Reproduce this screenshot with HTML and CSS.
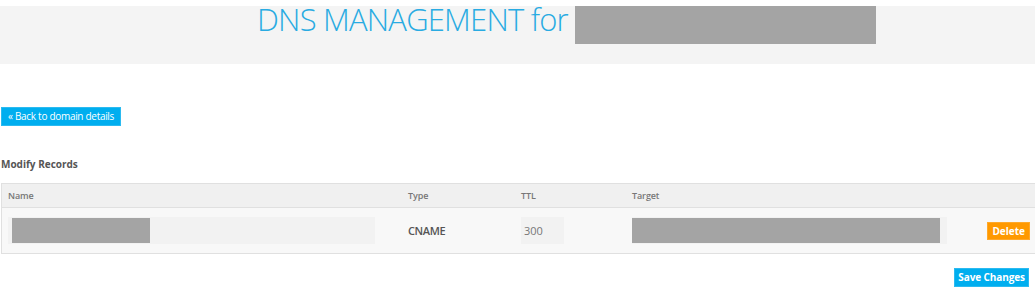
FILE: index.html
```html
<!DOCTYPE html>
<html lang="en">
<head>
<meta charset="utf-8">
<title>DNS Management</title>
<link rel="stylesheet" href="styles.css">
</head>
<body>
<header class="hero">
  <h1 class="hero-title">DNS MANAGEMENT for <span class="redact redact-title"></span></h1>
</header>
<main class="content">
  <div class="back-row"><a class="btn btn-blue" href="#">« Back to domain details</a></div>
  <h2 class="section-title">Modify Records</h2>
  <div class="records">
    <div class="rec-row rec-head">
      <div class="cell">Name</div>
      <div class="cell">Type</div>
      <div class="cell">TTL</div>
      <div class="cell">Target</div>
      <div class="cell"></div>
    </div>
    <div class="rec-row rec-body">
      <div class="cell"><div class="field field-name"><span class="redact redact-name"></span></div></div>
      <div class="cell type">CNAME</div>
      <div class="cell"><input class="field field-ttl" type="text" value="300"></div>
      <div class="cell"><div class="field field-target"><span class="redact redact-target"></span></div></div>
      <div class="cell actions"><a class="btn btn-orange" href="#">Delete</a></div>
    </div>
  </div>
  <div class="save-row"><a class="btn btn-blue btn-bold" href="#">Save Changes</a></div>
</main>
</body>
</html>
```
FILE: styles.css
```css
html, body {
  margin: 0;
  padding: 0;
  background: #ffffff;
  overflow: hidden;
}
body {
  font-family: "Open Sans", "Liberation Sans", sans-serif;
  color: #555;
}
.hero {
  display: flow-root;
  margin-top: 6px;
  height: 58px;
  background: #f4f4f4;
  padding-left: 257px;
}
.hero-title {
  margin: 0;
  font-size: 31px;
  font-weight: 300;
  line-height: 24px;
  letter-spacing: -0.8px;
  color: #29abe2;
  white-space: nowrap;
}
.redact {
  display: inline-block;
  background: #a4a4a4;
}
.redact-title {
  width: 301px;
  height: 38px;
  vertical-align: -13px;
}
.content {
  padding-left: 1px;
}
.back-row {
  display: flex;
  margin-top: 43px;
}
.btn {
  display: inline-block;
  font-size: 10px;
  color: #ffffff;
  text-decoration: none;
  white-space: nowrap;
}
.btn-blue {
  background: #00aeef;
  border: 1px solid #2bbaf0;
  padding: 0 6px;
  line-height: 17px;
  letter-spacing: -0.3px;
}
.btn-bold {
  font-weight: 700;
  padding: 0 3px;
  letter-spacing: -0.1px;
}
.btn-orange {
  background: #ff9900;
  border: 1px solid #ffa82a;
  font-weight: 700;
  padding: 0 4px;
  line-height: 16px;
}
.section-title {
  margin: 31px 0 0;
  font-size: 10px;
  font-weight: 700;
  line-height: 15px;
  color: #555;
}
.records {
  margin-top: 11px;
  border-top: 1px solid #e0e0e0;
  border-left: 1px solid #e0e0e0;
  border-bottom: 1px solid #e0e0e0;
}
.rec-row {
  display: grid;
  grid-template-columns: 400px 113px 111px 1fr auto;
  align-items: center;
}
.rec-head {
  background: #f0f0f0;
  height: 23px;
  border-bottom: 1px solid #e0e0e0;
  font-size: 9px;
  font-weight: 600;
  letter-spacing: -0.1px;
  color: #777;
}
.rec-body {
  background: #f8f8f8;
  padding: 9px 0;
}
.cell {
  padding-left: 6px;
}
.type {
  font-size: 11px;
  font-weight: 600;
  letter-spacing: -0.4px;
  color: #555;
}
.field {
  display: block;
  box-sizing: border-box;
  height: 27px;
  background: #f2f2f2;
  border: none;
  margin: 0;
}
.field-name {
  width: 367px;
  padding: 1px 0 1px 4px;
}
.redact-name {
  width: 138px;
  height: 25px;
}
.field-ttl {
  width: 43px;
  padding: 0 3px;
  font-family: "Open Sans", "Liberation Sans", sans-serif;
  font-size: 11px;
  color: #777;
  outline: none;
}
.field-target {
  width: 315px;
  padding: 1px 0;
}
.redact-target {
  width: 308px;
  height: 25px;
}
.actions {
  padding-right: 5px;
  display: flex;
  justify-content: flex-end;
}
.save-row {
  display: flex;
  justify-content: flex-end;
  margin-top: 14px;
  padding-right: 6px;
}
```
